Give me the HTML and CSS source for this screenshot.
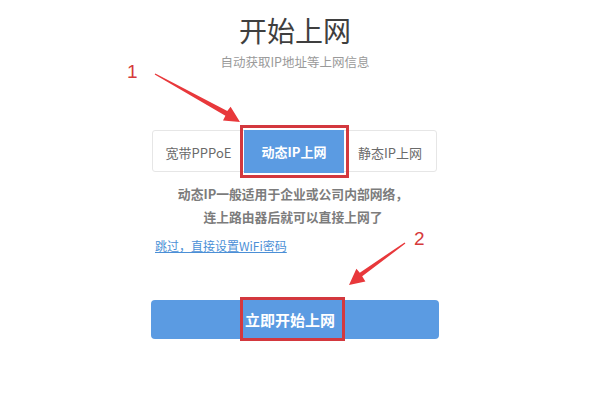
FILE: index.html
```html
<!DOCTYPE html>
<html lang="zh-CN">
<head>
<meta charset="utf-8">
<title>开始上网</title>
<link rel="stylesheet" href="styles.css">
</head>
<body>
<div class="page">
  <h1 class="title">开始上网</h1>
  <p class="subtitle">自动获取IP地址等上网信息</p>
  <div class="tabs">
    <div class="tab">宽带PPPoE</div>
    <div class="tab active">动态IP上网</div>
    <div class="tab">静态IP上网</div>
  </div>
  <p class="desc">动态IP一般适用于企业或公司内部网络，<br>连上路由器后就可以直接上网了</p>
  <a class="skip" href="#">跳过，直接设置WiFi密码</a>
  <button class="start">立即开始上网</button>
</div>
<svg class="annot" width="600" height="409" viewBox="0 0 600 409">
  <text x="127" y="78" class="num">1</text>
  <text x="414" y="245" class="num">2</text>
  <polygon class="arrow" points="155.3,73.4 227.3,111 230.6,106.8 240,122 223,120.6 225.4,115.8 154.7,74.6"/>
  <polygon class="arrow" points="404.6,242.4 359.8,272.7 356.4,268.8 349,285 365.4,281.6 362.2,276.2 405.4,243.6"/>
  <rect class="box" x="241.5" y="126.5" width="106" height="50"/>
  <rect class="box" x="241.5" y="298.5" width="102" height="41"/>
</svg>
</body>
</html>
```
FILE: styles.css
```css
html, body {
  margin: 0;
  padding: 0;
  background: #fff;
}
body {
  width: 600px;
  height: 409px;
  position: relative;
  overflow: hidden;
  font-family: "Noto Sans CJK SC", "Noto Sans", sans-serif;
}
.page {
  width: 288px;
  margin-left: 151px;
  padding-top: 15px;
  display: flex;
  flex-direction: column;
}
.title {
  margin: 0;
  font-size: 28px;
  line-height: 30px;
  font-weight: 400;
  color: #3f3f3f;
  text-align: center;
}
.subtitle {
  margin: 7px 0 0;
  font-size: 12.5px;
  line-height: 20px;
  color: #9a9a9a;
  text-align: center;
}
.tabs {
  margin: 58px 0 0 1px;
  width: 285px;
  height: 42px;
  box-sizing: border-box;
  border: 1px solid #e6e6e6;
  border-radius: 3px;
  display: grid;
  grid-template-columns: 91px 100px 1fr;
}
.tab {
  display: flex;
  align-items: center;
  justify-content: center;
  font-size: 13px;
  color: #6a6a6a;
}
.tab.active {
  background: #5b9be2;
  color: #fff;
  font-weight: 700;
  margin: -1px 0 0;
  height: 43px;
}
.desc {
  margin: 10px 0 0;
  font-size: 12.8px;
  line-height: 23px;
  font-weight: 700;
  color: #7c7c7c;
  text-align: center;
  padding-right: 4px;
}
.skip {
  margin: 8px 0 0 4px;
  font-size: 12px;
  line-height: 20px;
  color: #4b8fd6;
  text-decoration: underline;
  align-self: flex-start;
}
.start {
  margin-top: 44px;
  height: 39px;
  border: 0;
  border-radius: 4px;
  background: #5b9be2;
  color: #fff;
  font-family: "Noto Sans CJK SC", sans-serif;
  font-size: 15px;
  font-weight: 700;
  padding: 0 10px 0 0;
}
.annot {
  position: absolute;
  left: 0;
  top: 0;
  pointer-events: none;
}
.num {
  font-family: "Liberation Sans", sans-serif;
  font-size: 19px;
  fill: #d63a3a;
}
.arrow {
  fill: #e8383b;
}
.box {
  fill: none;
  stroke: #d3383e;
  stroke-width: 3;
}
```
